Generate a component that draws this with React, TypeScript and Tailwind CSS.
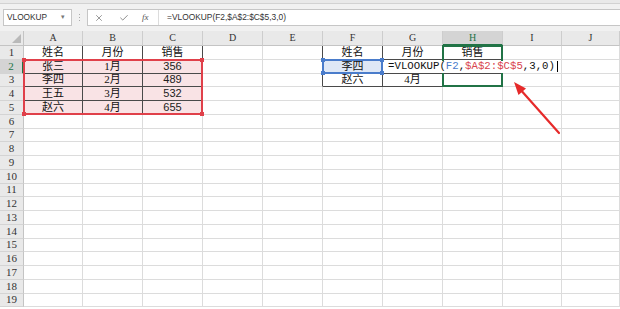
import React from 'react';
import clsx from 'clsx';
import { X, Check } from 'lucide-react';

const cols = ['A', 'B', 'C', 'D', 'E', 'F', 'G', 'H', 'I', 'J'];
const rows = Array.from({ length: 19 }, (_, i) => i + 1);

// cell values keyed by "r-c"
const values: Record<string, string> = {
  '1-0': '姓名', '1-1': '月份', '1-2': '销售',
  '2-0': '张三', '2-1': '1月', '2-2': '356',
  '3-0': '李四', '3-1': '2月', '3-2': '489',
  '4-0': '王五', '4-1': '3月', '4-2': '532',
  '5-0': '赵六', '5-1': '4月', '5-2': '655',
  '1-5': '姓名', '1-6': '月份', '1-7': '销售',
  '2-5': '李四',
  '3-5': '赵六', '3-6': '4月',
};

const inLeftTable = (r: number, c: number) => r >= 1 && r <= 5 && c <= 2;
const inRightTable = (r: number, c: number) => r >= 1 && r <= 3 && c >= 5 && c <= 7;

const Cell: React.FC<{ r: number; c: number }> = ({ r, c }) => {
  const v = values[`${r}-${c}`];
  const darkRight = inLeftTable(r, c) || inRightTable(r, c) || (c === 4 && r >= 1 && r <= 3);
  const darkBottom = inLeftTable(r, c) || inRightTable(r, c);
  const isNumber = c === 2 && r >= 2 && r <= 5;
  return (
    <div
      style={{ gridRow: r + 1, gridColumn: c + 2 }}
      className={clsx(
        'border-r border-b border-[#dcdcdc] flex items-center justify-center leading-none text-[11px] text-[#111] overflow-hidden',
        darkRight && 'border-r-[#4a4a4a]',
        darkBottom && 'border-b-[#4a4a4a]',
        r >= 2 && r <= 5 && c <= 2 && 'bg-[#f9e3e5]',
        r === 2 && c === 5 && 'bg-[#dfe8f6]',
        isNumber
          ? "font-['Liberation_Sans',sans-serif] text-[11.5px] text-[#222]"
          : "font-['Liberation_Serif','Noto_Sans_CJK_SC',serif]"
      )}
    >
      {v}
    </div>
  );
};

const Corners: React.FC<{ color: string }> = ({ color }) => (
  <>
    <span className={clsx('absolute -left-[3px] -top-[3px] w-[4px] h-[4px]', color)} />
    <span className={clsx('absolute -right-[3px] -top-[3px] w-[4px] h-[4px]', color)} />
    <span className={clsx('absolute -left-[3px] -bottom-[3px] w-[4px] h-[4px]', color)} />
    <span className={clsx('absolute -right-[3px] -bottom-[3px] w-[4px] h-[4px]', color)} />
  </>
);

export default function App() {
  return (
    <div className="relative w-[620px] h-[309px] overflow-hidden bg-white font-['Liberation_Sans',sans-serif]">
      {/* ribbon edge */}
      <div className="h-[4px] bg-[#e9e9e9] border-b border-[#d2d2d2]" />

      {/* formula bar */}
      <div className="h-[25px] bg-[#f1f1f1] flex items-start pt-[5px] pl-[3px]">
        <div className="w-[69px] h-[17px] bg-white border border-[#c6c6c6] flex items-center pl-[3px] text-[8.3px] text-[#333]">
          VLOOKUP
          <span className="ml-auto mr-[6px] text-[7px] text-[#777]">▾</span>
        </div>
        <div className="w-[15px] h-[17px] flex flex-col items-center justify-center gap-[2px]">
          <span className="w-[1px] h-[1px] bg-[#aaa]" />
          <span className="w-[1px] h-[1px] bg-[#aaa]" />
          <span className="w-[1px] h-[1px] bg-[#aaa]" />
        </div>
        <div className="flex-1 h-[17px] bg-white border border-r-0 border-[#c6c6c6] flex items-center">
          <div className="w-[70px] h-full flex items-center pl-[6px] text-[#666]">
            <X size={10} strokeWidth={1.6} />
            <Check size={10} strokeWidth={1.8} className="ml-[15px]" />
            <span className="ml-[13px] font-['Liberation_Serif',serif] italic text-[9px] text-[#555]">fx</span>
          </div>
          <div className="h-full border-l border-[#dcdcdc] pl-[8px] flex items-center text-[8.4px] text-[#333]">
            =VLOOKUP(F2,$A$2:$C$5,3,0)
          </div>
        </div>
      </div>
      <div className="h-[2px] bg-[#f1f1f1]" />

      {/* sheet grid */}
      <div className="grid grid-cols-[24px_59px_60px_60px_60px_60px_60px_60px_60px_59px_1fr] grid-rows-[15px_repeat(19,13.75px)]">
        {/* corner */}
        <div className="row-start-1 col-start-1 bg-[#e9e9e9] border-r border-b border-[#c4c4c4] flex items-end justify-end p-[2px]">
          <div className="w-0 h-0 border-l-[9px] border-l-transparent border-b-[9px] border-b-[#b9b9b9]" />
        </div>
        {cols.map((col, i) => (
          <div
            key={col}
            style={{ gridRow: 1, gridColumn: i + 2 }}
            className={clsx(
              "flex items-center justify-center font-['Liberation_Serif',serif] text-[10px] leading-none border-r border-[#cdcdcd]",
              i === 7
                ? 'bg-[#d4d4d4] text-[#217346] border-b-2 border-b-[#217346]'
                : 'bg-[#e9e9e9] text-[#333] border-b border-b-[#c4c4c4]'
            )}
          >
            {col}
          </div>
        ))}

        {rows.map((r) => (
          <React.Fragment key={r}>
            <div
              style={{ gridRow: r + 1, gridColumn: 1 }}
              className={clsx(
                "flex items-center justify-center font-['Liberation_Serif',serif] text-[11px] leading-none border-b border-[#d4d4d4]",
                r === 2
                  ? 'bg-[#d4d4d4] text-[#217346] border-r-2 border-r-[#217346]'
                  : 'bg-[#e9e9e9] text-[#333] border-r border-r-[#c4c4c4]'
              )}
            >
              {r}
            </div>
            {cols.map((_, c) => (
              <Cell key={c} r={r} c={c} />
            ))}
          </React.Fragment>
        ))}

        {/* referenced range A2:C5 */}
        <div className="relative row-start-3 row-end-7 col-start-2 col-end-5 -mt-px -ml-px border-2 border-[#e0404a]">
          <Corners color="bg-[#e0404a]" />
        </div>
        {/* referenced cell F2 */}
        <div className="relative row-start-3 row-end-4 col-start-7 col-end-8 -mt-px -ml-px border-2 border-[#4a7ccb]">
          <Corners color="bg-[#4a7ccb]" />
        </div>
        {/* active column outline */}
        <div className="row-start-2 row-end-5 col-start-9 col-end-10 -mt-px -ml-px border-2 border-[#217346]" />

        {/* in-cell editor for H2 */}
        <div className="row-start-3 row-end-4 col-start-9 col-end-10 flex items-center justify-center overflow-visible z-10">
          <div className="bg-white whitespace-nowrap h-[12px] flex items-center font-['Liberation_Mono',monospace] text-[10.7px] leading-none text-[#111] px-[1px]">
            =VLOOKUP(<span className="text-[#4a7ccb]">F2</span>,<span className="text-[#d8434d]">$A$2:$C$5</span>,3,0)
            <span className="ml-[2px] w-px h-[11px] bg-black" />
          </div>
        </div>
      </div>

      {/* annotation arrow */}
      <svg className="absolute left-0 top-0 pointer-events-none" width="620" height="309">
        <line x1="559" y1="133" x2="519" y2="88" stroke="#e62a2a" strokeWidth="2.2" strokeLinecap="round" />
        <polygon points="514,82 526,88.5 518.5,95" fill="#e62a2a" />
      </svg>
    </div>
  );
}
